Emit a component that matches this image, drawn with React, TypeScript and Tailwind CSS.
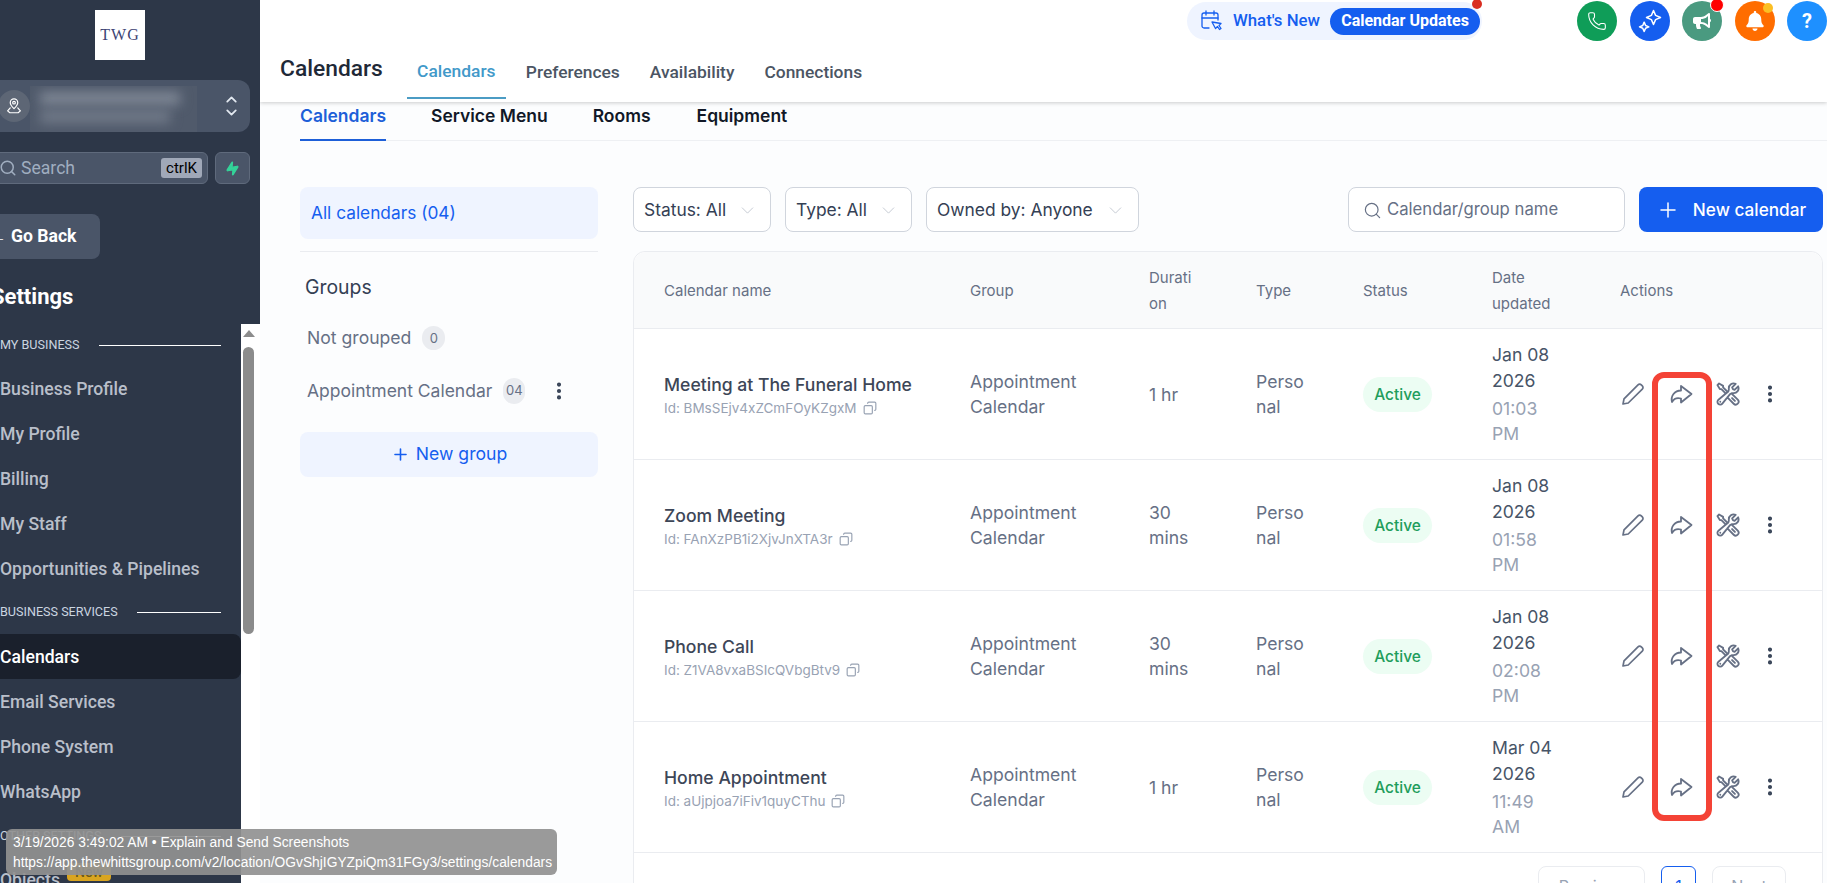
import React from 'react';
import { ChevronDown, ChevronUp, Copy, MoreVertical, Phone, Plus, Search, Zap } from 'lucide-react';
import { FaBell, FaBullhorn } from 'react-icons/fa';
import { HiOutlineWrenchScrewdriver } from 'react-icons/hi2';

const roboto = 'font-["Roboto",sans-serif]';

const NavSection = ({ label, lineClass }: { label: string; lineClass: string }) => (
    <div className="flex h-[44px] items-center">
        <span className="text-[12.6px] text-[#cbd5e0] whitespace-nowrap">{label}</span>
        <span className={`h-[1px] bg-white ${lineClass}`}></span>
    </div>
);

const NavItem = ({ label, active }: { label: string; active?: boolean }) => (
    <div className={`flex h-[45px] pt-[1px] items-center rounded-r-lg text-[17.6px] font-medium ${active ? 'bg-[#1a202c] text-white' : 'text-[#b9bfca]'}`}>
        {label}
    </div>
);

const Sidebar = () => (
    <aside className={`w-[260px] h-[883px] shrink-0 flex flex-col overflow-hidden ${roboto}`}>
        <div className="h-[324px] shrink-0 bg-[#2d3748] overflow-hidden">
            <div className="h-[50px] mt-[10px] pl-[95px]">
                <div className="w-[50px] h-[50px] bg-white flex items-center justify-center font-['Liberation_Serif',serif] text-[16px] tracking-[1px] text-[#3d4474]">TWG</div>
            </div>
            <div className="relative mt-[20px] w-[262px] ml-[-12px] h-[52px] rounded-xl bg-[#4a5568] flex items-center">
                <div className="ml-[10px] w-[32px] h-[32px] rounded-full bg-[#5d6675] flex items-center justify-center">
                    <svg width="18" height="18" viewBox="0 0 24 24" fill="none" stroke="white" strokeWidth="1.6" strokeLinecap="round" strokeLinejoin="round">
                        <path d="M12 15.5c3-3 5-5.2 5-8a5 5 0 0 0-10 0c0 2.800 2 5 5 8z" />
                        <circle cx="12" cy="7.500" r="1.800" />
                        <path d="M7 14.500l-3.500 4 3 2.500h11l3-2.500-3.500-4" />
                    </svg>
                </div>
                <div className="w-[167px] h-[46px] mt-[6px] bg-[#505a6b] overflow-hidden">
                    <div className="mt-[6px] ml-[10px] w-[140px] h-[13px] bg-[#7f8896] blur-[6px]"></div>
                    <div className="mt-[5px] ml-[10px] w-[130px] h-[13px] bg-[#717a89] blur-[6px]"></div>
                </div>
                <div className="ml-auto mr-[10px] flex flex-col text-[#e2e8f0]">
                    <ChevronUp size={17} strokeWidth={2.5} className="mb-[-3px]" />
                    <ChevronDown size={17} strokeWidth={2.500} className="mt-[-1px]" />
                </div>
            </div>
            <div className="mt-[20px] flex gap-[7px] ml-[-12px] w-[262px] h-[32px]">
                <div className="flex-1 h-[32px] rounded-md bg-[#4a5568] border border-[#5f6a7c] flex items-center pl-[10px]">
                    <Search size={18} className="text-[#a0aec0]" />
                    <span className="ml-[4px] text-[17.6px] text-[#a0aec0]">Search</span>
                    <span className="ml-auto mr-[5px] h-[20px] w-[41px] rounded-[3px] bg-[#a0a8b8] text-[15px] text-black flex items-center justify-center">ctrlK</span>
                </div>
                <div className="w-[35px] h-[32px] rounded-md bg-[#4a5568] border border-[#5f6a7c] flex items-center justify-center">
                    <Zap size={15} className="text-[#34d399] -rotate-12" fill="#34d399" />
                </div>
            </div>
            <div className="mt-[30px] ml-[-12px] w-[112px] h-[45px] rounded-lg bg-[#4a5568] flex items-center pl-[1px] text-[17.6px] font-bold text-white whitespace-nowrap">
                ← Go Back
            </div>
            <div className="mt-[21px] ml-[-9px] text-[22px] font-bold text-white">Settings</div>
        </div>
        <div className="flex flex-1 min-h-0 bg-white">
            <nav className="w-[241px] shrink-0 bg-[#2d3748] overflow-hidden relative">
                <div className="mt-[-1px]">
                    <NavSection label="MY BUSINESS" lineClass="ml-[19px] w-[122px]" />
                    <div className="mt-[-1px]">
                        <NavItem label="Business Profile" />
                        <NavItem label="My Profile" />
                        <NavItem label="Billing" />
                        <NavItem label="My Staff" />
                        <NavItem label="Opportunities & Pipelines" />
                    </div>
                    <div className="mt-[-1px]">
                        <NavSection label="BUSINESS SERVICES" lineClass="ml-[19px] w-[84px]" />
                    </div>
                    <NavItem label="Calendars" active />
                    <NavItem label="Email Services" />
                    <NavItem label="Phone System" />
                    <NavItem label="WhatsApp" />
                    <NavSection label="OTHER SETTINGS" lineClass="ml-[20px] w-[100px]" />
                    <div className="flex h-[45px] items-center text-[17.6px] font-medium text-[#b9bfca]">
                        Objects
                        <span className="ml-[7px] mt-[-18px] w-[44px] h-[18px] rounded-sm bg-[#d9a520] text-[#6b5a1e] text-sm flex items-center justify-center">New</span>
                    </div>
                </div>
            </nav>
            <div className="flex-1 flex flex-col items-center pr-[4px]">
                <div className="mt-[6px] w-0 h-0 border-x-[6px] border-x-transparent border-b-[7px] border-b-[#8c8c8c]"></div>
                <div className="mt-[10px] w-[11px] h-[287px] rounded-full bg-[#8c8c8c]"></div>
            </div>
        </div>
    </aside>
);

const RoundButton = ({ bg, children, dot }: { bg: string; children: React.ReactNode; dot?: React.ReactNode }) => (
    <div className={`relative w-[40px] h-[40px] rounded-full flex items-center justify-center ${bg}`}>
        {children}
        {dot}
    </div>
);

const TopBar = () => (
    <header className={`h-[102px] shrink-0 bg-white shadow-[0_1px_4px_rgba(0,0,0,0.2)] relative z-10 ${roboto}`}>
        <div className="flex items-start h-[44px]">
            <div className="relative ml-[927px] mt-[2px] w-[299px] h-[38px] rounded-full bg-[#eff4ff] flex items-center pl-[14px]">
                <svg width="22" height="24" viewBox="0 0 22 24" fill="none" stroke="#155eef" strokeWidth="1.300" strokeLinejoin="round" strokeLinecap="round">
                    <path d="M8 19H3a2 2 0 0 1-2-2V6a2 2 0 0 1 2-2h12a2 2 0 0 1 2 2v5" />
                    <path d="M1 9h16M5 2v4M13 2v4" />
                    <path d="M11 12l9 1.500-2 2 2 3-1.500 1-2-3-2 2z" transform="translate(0 1)" />
                </svg>
                <span className="ml-[10px] text-[#155eef] text-[16.8px] font-medium whitespace-nowrap">What's New</span>
                <span className="ml-[10px] w-[150px] h-[27px] rounded-full bg-[#155eef] text-white text-[16px] font-bold flex items-center justify-center whitespace-nowrap">Calendar Updates</span>
                <span className="absolute right-[0px] top-[-3px] w-[10px] h-[10px] rounded-full bg-[#d92d20]"></span>
            </div>
            <div className="ml-[95px] mt-[1px] flex gap-[12.500px]">
                <RoundButton bg="bg-[#0f9d58]"><Phone size={20} strokeWidth={1.300} className="text-white" /></RoundButton>
                <RoundButton bg="bg-[#155eef]">
                    <svg width="28" height="28" viewBox="0 0 24 24" fill="none" stroke="white" strokeWidth="1.300" strokeLinejoin="round">
                        <path d="M15 3l1.800 4.200L21 9l-4.200 1.800L15 15l-1.800-4.200L9 9l4.200-1.800z" />
                        <path d="M7 13l1.200 2.800L11 17l-2.800 1.200L7 21l-1.200-2.800L3 17l2.800-1.200z" />
                    </svg>
                </RoundButton>
                <RoundButton bg="bg-[#4a9a80]" dot={<span className="absolute right-[-2px] top-[-3px] w-[14px] h-[14px] rounded-full bg-[#ff0000] border border-white"></span>}>
                    <FaBullhorn size={18} className="text-white" />
                </RoundButton>
                <RoundButton bg="bg-[#ff6d00]" dot={<span className="absolute right-[2px] top-[2px] w-[10px] h-[10px] rounded-full bg-[#fbbf24]"></span>}>
                    <FaBell size={20} className="text-white" />
                </RoundButton>
                <RoundButton bg="bg-[#1e90ff]"><span className="text-white text-xl font-bold">?</span></RoundButton>
            </div>
        </div>
        <div className="flex items-start">
            <div className="ml-[20px] mt-[8px] text-[22.8px] font-medium text-[#1f2937]">Calendars</div>
            <div className="ml-[24px] flex text-[17.4px] font-medium">
                <div className="w-[99px] h-[55px] pt-[14px] text-center text-[#4299c9] border-b-2 border-[#4b9cc4]">Calendars</div>
                <div className="ml-[20px] pt-[15px] text-[#4b5563]">Preferences</div>
                <div className="ml-[30px] pt-[15px] text-[#4b5563]">Availability</div>
                <div className="ml-[30px] pt-[15px] text-[#4b5563]">Connections</div>
            </div>
        </div>
    </header>
);

const SubTabs = () => (
    <div className="ml-[40px] h-[39px] pt-[1px] flex border-b border-[#eef0f3] text-[17.5px] font-semibold text-[#111827]">
        <div className="w-[86px] h-[38px] border-b-2 border-[#1d5fd8] text-[#1d5fd8]">Calendars</div>
        <div className="ml-[45px]">Service Menu</div>
        <div className="ml-[45px]">Rooms</div>
        <div className="ml-[46px]">Equipment</div>
    </div>
);

const GroupsPanel = () => (
    <div className="w-[298px] shrink-0">
        <div className="h-[52px] rounded-lg bg-[#eff4ff] flex items-center pl-[11px] text-[17.3px] text-[#155eef]">All calendars (04)</div>
        <div className="mt-[12px] h-[1px] bg-[#eaecf0]"></div>
        <div className="mt-[21px] pl-[5px] text-[19.4px] text-[#344054]">Groups</div>
        <div className="mt-[23px] pl-[7px] flex items-center text-[17.6px] text-[#667085]">
            Not grouped
            <span className="ml-[11px] w-[23px] h-[24px] rounded-full bg-[#eaecf0] text-[13px] flex items-center justify-center">0</span>
        </div>
        <div className="mt-[26px] pl-[7px] flex items-center text-[17.5px] text-[#667085]">
            Appointment Calendar
            <span className="ml-[11px] w-[22px] h-[26px] rounded-full bg-[#eaecf0] text-[13px] flex items-center justify-center">04</span>
            <MoreVertical size={22} strokeWidth={2.500} className="ml-[23px] text-[#344054]" />
        </div>
        <div className="mt-[28px] h-[45px] rounded-lg bg-[#eff4ff] flex items-center justify-center gap-[6px] text-[17.6px] text-[#155eef]">
            <Plus size={19} />
            New group
        </div>
    </div>
);

const FilterSelect = ({ label, width }: { label: string; width: string }) => (
    <div className={`h-[45px] rounded-lg border border-[#d0d5dd] bg-white flex items-center justify-between pl-[10px] pr-[12px] pt-[1px] text-[17.4px] text-[#344054] ${width}`}>
        {label}
        <ChevronDown size={21} strokeWidth={1.100} className="text-[#c4c9d2]" />
    </div>
);

const rows = [
    { name: 'Meeting at The Funeral Home', id: 'BMsSEjv4xZCmFOyKZgxM', dur: ['1 hr'], date: 'Jan 08', time: '01:03' , ampm: 'PM' },
    { name: 'Zoom Meeting', id: 'FAnXzPB1i2XjvJnXTA3r', dur: ['30', 'mins'], date: 'Jan 08', time: '01:58', ampm: 'PM' },
    { name: 'Phone Call', id: 'Z1VA8vxaBSIcQVbgBtv9', dur: ['30', 'mins'], date: 'Jan 08', time: '02:08', ampm: 'PM' },
    { name: 'Home Appointment', id: 'aUjpjoa7iFiv1quyCThu', dur: ['1 hr'], date: 'Mar 04', time: '11:49', ampm: 'AM' },
];

const gridCols = 'grid grid-cols-[306px_179px_107px_107px_129px_128px_1fr] pl-[30px] items-center';

const CalendarRow = ({ row }: { row: (typeof rows)[number] }) => (
    <div className={`${gridCols} h-[131px] border-t border-[#eaecf0] bg-white text-[17.6px] text-[#667085] leading-[25px]`}>
        <div className="pt-[2px]">
            <div className="font-medium text-[#3d4657]">{row.name}</div>
            <div className="flex items-center mt-[1px] text-[13.5px] leading-[21px] text-[#98a2b3]">
                Id: {row.id}
                <Copy size={14} className="ml-[6px] -scale-x-100" />
            </div>
        </div>
        <div>Appointment<br />Calendar</div>
        <div>{row.dur.map((d) => <div key={d}>{d}</div>)}</div>
        <div>Perso<br />nal</div>
        <div>
            <span className="inline-flex w-[69px] h-[35px] rounded-full bg-[#ecfdf3] text-[#1f9d5c] text-[15.5px] font-medium items-center justify-center">Active</span>
        </div>
        <div>
            <div className="text-[#475467] leading-[26px]">{row.date}<br />2026</div>
            <div className="text-[#98a2b3] mt-[2px]">{row.time}<br />{row.ampm}</div>
        </div>
        <div className="flex items-center text-[#667085] pl-[1px]">
            <svg width="24" height="24" viewBox="0 0 24 24" fill="none" stroke="currentColor" strokeWidth="1.700" strokeLinejoin="round">
                <path d="M2 22l1-5.200L17 2.800a2.300 2.300 0 0 1 3.300 0l1 1a2.300 2.300 0 0 1 0 3.300L7.200 21z" />
            </svg>
            <svg width="24" height="24" viewBox="0 0 24 24" fill="none" stroke="currentColor" strokeWidth="1.800" strokeLinejoin="round" className="ml-[24px]">
                <path d="M12 4L22.500 12 12 20.500V16.500C8.500 15.500 5 16.500 3 20 1.500 14 5.500 8.500 12 8.500z" />
            </svg>
            <HiOutlineWrenchScrewdriver size={26} className="ml-[22px] [stroke-width:1.7]" />
            <MoreVertical size={22} strokeWidth={2.500} className="ml-[18px] text-[#344054]" />
        </div>
    </div>
);

const CalendarsTable = () => (
    <div className="relative mt-[19px] rounded-xl border border-[#eaecf0] bg-white">
        <div className={`${gridCols} h-[76px] pt-[1px] rounded-t-xl bg-[#f9fafb] text-[15px] text-[#667085] leading-[26px]`}>
            <div>Calendar name</div>
            <div>Group</div>
            <div>Durati<br />on</div>
            <div>Type</div>
            <div>Status</div>
            <div>Date<br />updated</div>
            <div>Actions</div>
        </div>
        {rows.map((r) => <CalendarRow key={r.id} row={r} />)}
        <div className="border-t border-[#eaecf0] h-[60px] flex justify-end pr-[36px] pt-[13px] gap-[16px] text-base">
            <div className="w-[107px] h-[40px] rounded-lg border border-[#eaecf0] text-[#98a2b3] flex items-center justify-center">Previous</div>
            <div className="w-[35px] h-[40px] rounded-md border border-[#155eef] text-[#155eef] flex items-center justify-center">1</div>
            <div className="w-[74px] h-[40px] rounded-lg border border-[#eaecf0] text-[#98a2b3] flex items-center justify-center">Next</div>
        </div>
        {/* red highlight drawn over the share column */}
        <div className="absolute left-[1018px] top-[120px] w-[60px] h-[449px] rounded-xl border-[6px] border-[#f44336]"></div>
    </div>
);

export default function App() {
    return (
        <div className="relative flex w-[1827px] h-[883px] overflow-hidden bg-white font-['Inter',sans-serif]">
            <Sidebar />
            <main className="flex-1 min-w-0 flex flex-col bg-[#fcfdfe] overflow-hidden">
                <TopBar />
                <SubTabs />
                <div className="flex ml-[40px] mt-[46px] gap-[35px] mr-[4px]">
                    <GroupsPanel />
                    <div className="flex-1 min-w-0">
                        <div className="flex items-start gap-[14px]">
                            <FilterSelect label="Status: All" width="w-[138px]" />
                            <FilterSelect label="Type: All" width="w-[127px]" />
                            <FilterSelect label="Owned by: Anyone" width="w-[213px]" />
                            <div className="ml-auto h-[45px] w-[277px] rounded-lg border border-[#d0d5dd] bg-white flex items-center pl-[14px] pt-[1px] gap-[5px] text-[16.7px] text-[#667085]">
                                <Search size={19} strokeWidth={1.500} />
                                Calendar/group name
                            </div>
                            <div className="h-[45px] w-[184px] rounded-lg bg-[#155eef] text-white text-[17.2px] font-medium flex items-center justify-center gap-[13px]">
                                <Plus size={24} strokeWidth={1.500} />
                                New calendar
                            </div>
                        </div>
                        <CalendarsTable />
                    </div>
                </div>
            </main>
            {/* browser link tooltip */}
            <div className="absolute left-[6px] top-[829px] w-[551px] h-[46px] rounded-md bg-[#919191]/92 text-white text-[13.8px] leading-[20px] pl-[7px] pt-[4px] font-['Liberation_Sans',sans-serif] whitespace-nowrap">
                <div>3/19/2026 3:49:02 AM • Explain and Send Screenshots</div>
                <div>https://app.thewhittsgroup.com/v2/location/OGvShjIGYZpiQm31FGy3/settings/calendars</div>
            </div>
        </div>
    );
}
